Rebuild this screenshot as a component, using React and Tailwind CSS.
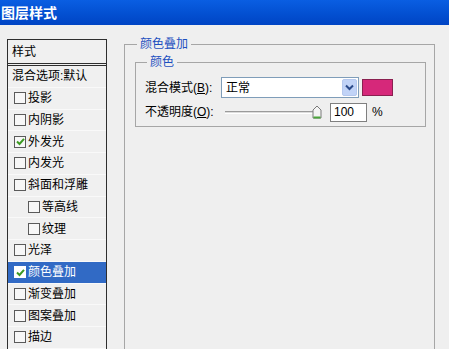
const styles = [
  { label: '投影' },
  { label: '内阴影' },
  { label: '外发光', checked: true },
  { label: '内发光' },
  { label: '斜面和浮雕' },
  { label: '等高线', indent: true },
  { label: '纹理', indent: true },
  { label: '光泽' },
  { label: '颜色叠加', checked: true, active: true },
  { label: '渐变叠加' },
  { label: '图案叠加' },
  { label: '描边' },
];

function CheckBox({ checked, active }) {
  return (
    <span
      className={`flex h-[12px] w-[12px] shrink-0 items-center justify-center border ${
        active ? 'border-white bg-white' : 'border-[#5a5a5a] bg-[#f7f7f7]'
      }`}
    >
      {checked && (
        <svg width="9" height="9" viewBox="0 0 9 9">
          <path d="M1 4.5 L3.5 7 L8 1.8" fill="none" stroke="#3c9a22" strokeWidth="2" />
        </svg>
      )}
    </span>
  );
}

function StyleRow({ label, checked, active, indent }) {
  return (
    <div
      className={`flex h-[21.75px] items-center gap-[2px] border-b border-[#f9f9f9] ${
        indent ? 'pl-[20px]' : 'pl-[6px]'
      } ${active ? 'bg-[#316ac5] text-white' : 'text-black'}`}
    >
      <CheckBox checked={checked} active={active} />
      <span>{label}</span>
    </div>
  );
}

export default function App() {
  return (
    <div
      className="h-[349px] w-[449px] overflow-hidden bg-[#efefef] text-[12px] leading-none text-black"
      style={{ fontFamily: '"Liberation Sans", "Noto Sans CJK SC", sans-serif' }}
    >
      <div className="flex h-[25px] items-center bg-gradient-to-b from-[#0a5ee2] to-[#0044c4] pl-[1px] text-[14px] font-bold text-white">
        图层样式
      </div>

      <div className="flex pl-[7px] pt-[14px]">
        <div className="h-[320px] w-[100px] shrink-0 border border-[#2e2e2e] bg-[#f0f0f0]">
          <div className="flex h-[26px] items-center border-b-[3px] border-double border-[#2e2e2e] pl-[4px]">
            样式
          </div>
          <div className="flex h-[21.75px] items-center border-b border-[#f9f9f9] pl-[4px]">
            混合选项:默认
          </div>
          {styles.map((s) => (
            <StyleRow key={s.label} {...s} />
          ))}
        </div>

        <fieldset className="ml-[17px] mt-[-1px] h-[330px] w-[311px] border border-[#a6a6a6] px-[10px] pr-[8px]">
          <legend className="ml-[2px] px-[3px] text-[12px] text-[#1c4fbf]">颜色叠加</legend>
          <fieldset className="mt-[6px] h-[71px] border border-[#a6a6a6] pt-[9px]">
            <legend className="ml-[11px] px-[3px] text-[12px] text-[#1c4fbf]">颜色</legend>
            <div className="flex h-[21px] items-center pl-[9px]">
              <span className="w-[76px]">
                混合模式(<span className="underline">B</span>):
              </span>
              <div className="flex h-[21px] w-[138px] items-center border border-[#7f9db9] bg-white pl-[4px]">
                <span className="flex-1">正常</span>
                <span className="mr-[1px] flex h-[17px] w-[15px] items-center justify-center rounded-[2px] border border-[#b5c8ee] bg-[#c1d3f7]">
                  <svg width="9" height="7" viewBox="0 0 9 7">
                    <path d="M1 1.5 L4.5 5 L8 1.5" fill="none" stroke="#2a4a8a" strokeWidth="2" />
                  </svg>
                </span>
              </div>
              <span className="ml-[3px] h-[17px] w-[31px] border border-[#8a2050] bg-[#d6287a]" />
            </div>
            <div className="flex h-[24px] items-center pl-[9px] pt-[4px]">
              <span className="w-[80px]">
                不透明度(<span className="underline">O</span>):
              </span>
              <div className="relative flex h-[14px] w-[99px] items-center">
                <div className="h-[3px] w-[95px] border-t border-b border-t-[#9a9a9a] border-b-white bg-[#dcdcdc]" />
                <svg className="absolute right-[2px] top-[0px]" width="10" height="14" viewBox="0 0 10 14">
                  <path d="M1 5 L5 1 L9 5 L9 13 L1 13 Z" fill="#f4f4f4" stroke="#7a7a7a" />
                  <path d="M1.5 12.5 L8.5 12.5" stroke="#4aa53a" strokeWidth="2" />
                </svg>
              </div>
              <div className="ml-[6px] flex h-[19px] w-[37px] items-center border border-[#7f7f7f] bg-white pl-[3px]">
                100
              </div>
              <span className="ml-[5px]">%</span>
            </div>
          </fieldset>
        </fieldset>
      </div>
    </div>
  );
}
